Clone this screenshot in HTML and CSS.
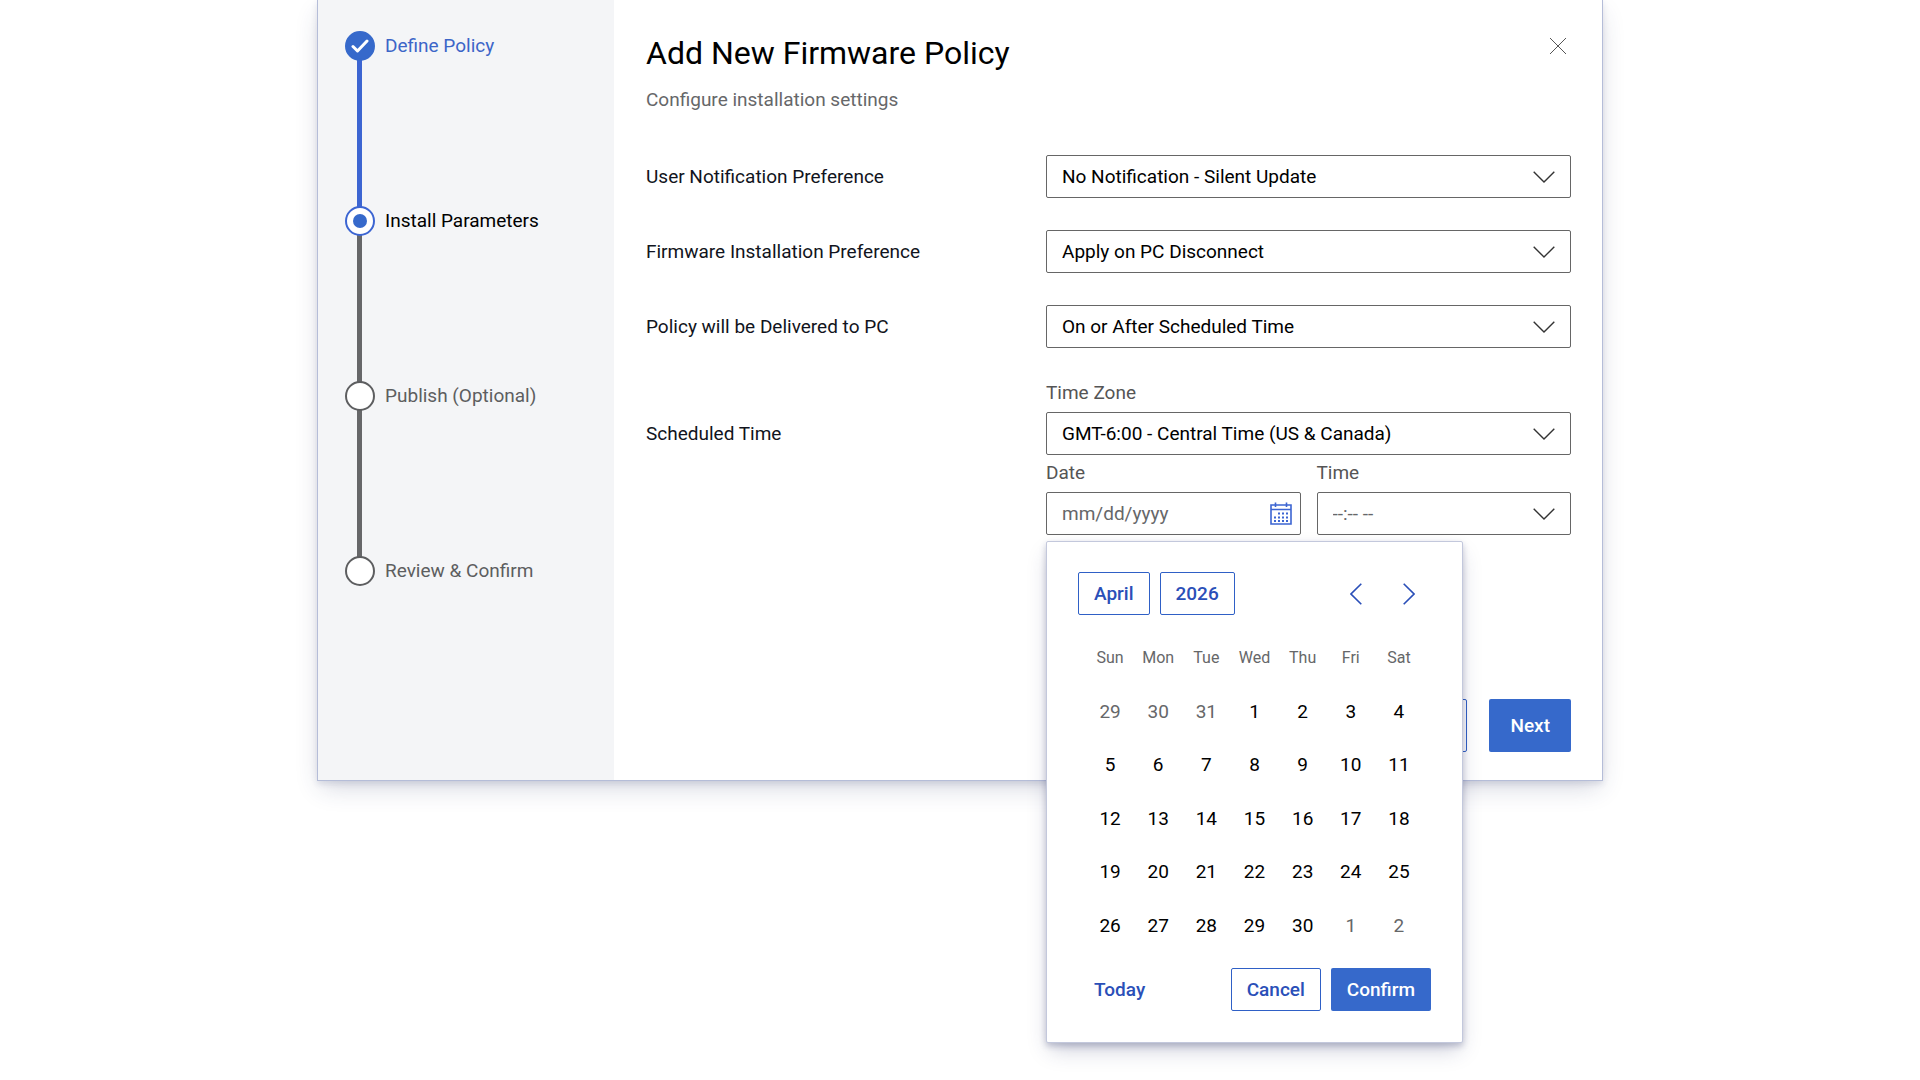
FILE: index.html
```html
<!DOCTYPE html>
<html lang="en">
<head>
<meta charset="utf-8">
<meta name="viewport" content="width=device-width, initial-scale=1">
<title>Add New Firmware Policy</title>
<link rel="stylesheet" href="styles.css">
</head>
<body>
<svg class="sprite" aria-hidden="true">
  <symbol id="chevron-down" viewBox="0 0 22 12"><path d="M0.7 0.7 11 11 21.3 0.7"/></symbol>
  <symbol id="chevron-left" viewBox="0 0 12 22"><path d="M11.3 0.7 1 11 11.3 21.3"/></symbol>
  <symbol id="chevron-right" viewBox="0 0 12 22"><path d="M0.7 0.7 11 11 0.7 21.3"/></symbol>
</svg>
<div class="dialog" role="dialog" aria-labelledby="dialog-title">
  <aside class="sidebar">
    <ol class="steps">
      <li class="step done">
        <span class="marker"><svg width="18" height="16" viewBox="0 0 18 16"><path d="M2 8.500 6.500 13 16 3"/></svg></span>
        <a class="step-label" href="#define">Define Policy</a>
      </li>
      <li class="step current" aria-current="step">
        <span class="marker"></span>
        <span class="step-label">Install Parameters</span>
      </li>
      <li class="step">
        <span class="marker"></span>
        <span class="step-label">Publish (Optional)</span>
      </li>
      <li class="step">
        <span class="marker"></span>
        <span class="step-label">Review &amp; Confirm</span>
      </li>
    </ol>
  </aside>
  <main class="content">
    <header class="header">
      <div>
        <h1 class="title" id="dialog-title">Add New Firmware Policy</h1>
        <p class="subtitle">Configure installation settings</p>
      </div>
      <button class="close" type="button" aria-label="Close"><svg width="18" height="18" viewBox="0 0 18 18"><path d="M1 1 17 17M17 1 1 17"/></svg></button>
    </header>
    <form class="form">
      <div class="row">
        <label for="notify">User Notification Preference</label>
        <div class="select"><select id="notify"><option>No Notification - Silent Update</option></select><svg class="chevron"><use href="#chevron-down"/></svg></div>
      </div>
      <div class="row">
        <label for="install">Firmware Installation Preference</label>
        <div class="select"><select id="install"><option>Apply on PC Disconnect</option></select><svg class="chevron"><use href="#chevron-down"/></svg></div>
      </div>
      <div class="row">
        <label for="deliver">Policy will be Delivered to PC</label>
        <div class="select"><select id="deliver"><option>On or After Scheduled Time</option></select><svg class="chevron"><use href="#chevron-down"/></svg></div>
      </div>
      <div class="row schedule">
        <span class="schedule-label">Scheduled Time</span>
        <div class="schedule-fields">
          <div class="field">
            <label for="zone">Time Zone</label>
            <div class="select"><select id="zone"><option>GMT-6:00 - Central Time (US &amp; Canada)</option></select><svg class="chevron"><use href="#chevron-down"/></svg></div>
          </div>
          <div class="pair">
            <div class="field date-field">
              <label for="date">Date</label>
              <div class="select date">
                <input id="date" type="text" placeholder="mm/dd/yyyy">
                <button class="date-toggle" type="button" aria-label="Open calendar">
                  <svg width="22" height="24" viewBox="0 0 22 24">
                    <path class="line" d="M1 3H21V22H1ZM1 7.500H21M5.500 0.500V5M16.500 0.500V5"/>
                    <path class="dots" d="M8 11.500H18M4 15.500H18M4 19H18"/>
                  </svg>
                </button>
              </div>
              <section class="calendar" aria-label="Choose date">
                <div class="calendar-bar">
                  <button class="btn outline" type="button">April</button>
                  <button class="btn outline" type="button">2026</button>
                  <div class="pager">
                    <button class="arrow" type="button" aria-label="Previous month"><svg><use href="#chevron-left"/></svg></button>
                    <button class="arrow" type="button" aria-label="Next month"><svg><use href="#chevron-right"/></svg></button>
                  </div>
                </div>
                <table class="days">
                  <thead><tr><th>Sun</th><th>Mon</th><th>Tue</th><th>Wed</th><th>Thu</th><th>Fri</th><th>Sat</th></tr></thead>
                  <tbody>
                    <tr><td class="out">29</td><td class="out">30</td><td class="out">31</td><td>1</td><td>2</td><td>3</td><td>4</td></tr>
                    <tr><td>5</td><td>6</td><td>7</td><td>8</td><td>9</td><td>10</td><td>11</td></tr>
                    <tr><td>12</td><td>13</td><td>14</td><td>15</td><td>16</td><td>17</td><td>18</td></tr>
                    <tr><td>19</td><td>20</td><td>21</td><td>22</td><td>23</td><td>24</td><td>25</td></tr>
                    <tr><td>26</td><td>27</td><td>28</td><td>29</td><td>30</td><td class="out">1</td><td class="out">2</td></tr>
                  </tbody>
                </table>
                <div class="calendar-bar">
                  <button class="btn plain" type="button">Today</button>
                  <button class="btn outline push" type="button">Cancel</button>
                  <button class="btn primary" type="button">Confirm</button>
                </div>
              </section>
            </div>
            <div class="field">
              <label for="time">Time</label>
              <div class="select time"><select id="time"><option>--:-- --</option></select><svg class="chevron"><use href="#chevron-down"/></svg></div>
            </div>
          </div>
        </div>
      </div>
      <footer class="actions">
        <button class="btn large outline" type="button">Back</button>
        <button class="btn large primary" type="submit">Next</button>
      </footer>
    </form>
  </main>
</div>
</body>
</html>
```
FILE: styles.css
```css
:root {
  --blue: #3669cb;
  --blue-text: #2a4fb8;
  --gray: #666769;
  --ink: #111420;
}

* {
  box-sizing: border-box;
}

body {
  min-height: 100vh;
  margin: 0;
  background: #fff;
  color: var(--ink);
  font: 19px/24px Roboto, "Liberation Sans", sans-serif;
}

h1, p, ol {
  margin: 0;
  padding: 0;
}

button, input, select {
  font: inherit;
  color: inherit;
}

svg {
  fill: none;
  stroke: currentColor;
}

.sprite {
  display: none;
}

.dialog {
  display: flex;
  max-width: 1286px;
  margin: 0 auto;
  border: 1px solid #b5bdd8;
  border-top: 0;
  box-shadow: 0 10px 24px -4px rgba(40, 48, 100, 0.2), 0 3px 6px rgba(40, 48, 100, 0.12);
}

/* Stepper */
.sidebar {
  flex: 0 0 296px;
  padding: 31px 27px;
  background: #f4f5f7;
}

.steps {
  list-style: none;
}

.step {
  display: flex;
  gap: 10px;
  position: relative;
  height: 175px;
  color: #5d5e60;
}

.step:last-child {
  height: 30px;
}

.step:not(:last-child)::before {
  content: "";
  position: absolute;
  top: 15px;
  left: 12px;
  width: 5px;
  height: 175px;
  background: var(--gray);
}

.step.done::before {
  background: #3c65d2;
}

.marker {
  display: grid;
  place-items: center;
  position: relative;
  z-index: 1;
  width: 30px;
  height: 30px;
  border: 2px solid #5d5e60;
  border-radius: 50%;
  background: #fff;
}

.done .marker {
  border-color: var(--blue);
  background: var(--blue);
  color: #fff;
  stroke-width: 3;
  stroke-linecap: round;
  stroke-linejoin: round;
}

.current .marker {
  border-color: #3c65d2;
}

.current .marker::before {
  content: "";
  width: 14px;
  height: 14px;
  border-radius: 50%;
  background: var(--blue);
}

.step-label {
  line-height: 29px;
}

.done .step-label {
  color: #3c65c8;
  text-decoration: none;
}

.current .step-label {
  color: #000;
}

/* Content */
.content {
  flex: 1;
  padding: 33px 31px 28px 32px;
}

.header {
  display: flex;
  justify-content: space-between;
  align-items: flex-start;
  margin-bottom: 43px;
}

.title {
  margin-bottom: 15px;
  color: #000;
  font-size: 32px;
  font-weight: 400;
  line-height: 40px;
}

.subtitle {
  color: var(--gray);
}

.close {
  display: grid;
  padding: 4px;
  border: 0;
  background: none;
  color: #555;
}

.form {
  display: flex;
  flex-direction: column;
  gap: 32px;
}

.row {
  display: grid;
  grid-template-columns: minmax(0, 1fr) 525px;
  align-items: center;
}

.select {
  display: grid;
  align-items: center;
  color: #000;
}

.select > * {
  grid-area: 1 / 1;
}

.select select,
.select input {
  width: 100%;
  height: 43px;
  padding: 0 15px;
  appearance: none;
  border: 1px solid #666;
  border-radius: 2px;
  outline: 0;
  background: #fff;
}

.select input::placeholder,
.select.time select {
  color: var(--gray);
  opacity: 1;
}

.chevron {
  justify-self: end;
  width: 22px;
  height: 12px;
  margin-right: 16px;
  color: #333;
  stroke-width: 1.4;
  pointer-events: none;
}

.schedule {
  align-items: start;
}

.schedule-label {
  padding-top: 42px;
}

.schedule-fields {
  display: grid;
  gap: 5px;
}

.field {
  display: grid;
  gap: 6px;
}

.field > label {
  color: #555;
  line-height: 26px;
}

.pair {
  display: grid;
  grid-template-columns: 1fr 1fr;
  gap: 16px;
}

.date-field {
  position: relative;
}

.date-toggle {
  display: grid;
  justify-self: end;
  margin-right: 9px;
  padding: 0;
  border: 0;
  background: none;
  color: #3c65d2;
  stroke-width: 1.6;
}

.dots {
  stroke-width: 2;
  stroke-dasharray: 2;
}

/* Buttons */
.btn {
  height: 43px;
  padding: 0 15px;
  border: 1px solid transparent;
  border-radius: 2px;
  background: none;
  color: var(--blue-text);
  font-weight: 500;
}

.btn.outline {
  border-color: #2f60c6;
  background: #fff;
}

.btn.primary {
  background: var(--blue);
  color: #fff;
}

.btn.large {
  height: 53px;
  padding: 0 20px;
}

.actions {
  display: flex;
  justify-content: flex-end;
  gap: 22px;
  margin-top: 132px;
}

/* Date picker */
.calendar {
  position: absolute;
  z-index: 2;
  top: calc(100% + 6px);
  left: 0;
  width: 417px;
  padding: 30px 31px 31px;
  border: 1px solid #c3c8dc;
  border-radius: 2px;
  background: #fff;
  box-shadow: 0 10px 20px -4px rgba(40, 48, 100, 0.25), 0 3px 6px rgba(40, 48, 100, 0.25);
}

.calendar-bar {
  display: flex;
  align-items: center;
  gap: 10px;
}

.push {
  margin-left: auto;
}

.pager {
  display: flex;
  gap: 25px;
  margin: 0 8px 0 auto;
}

.arrow {
  display: grid;
  padding: 0 8px;
  border: 0;
  background: none;
  color: var(--blue-text);
  stroke-width: 1.6;
}

.arrow svg {
  width: 12px;
  height: 22px;
}

.days {
  width: 337px;
  margin: 16px 8px;
  border-collapse: collapse;
  table-layout: fixed;
}

.days th,
.days td {
  height: 53px;
  padding: 0;
  text-align: center;
}

.days th,
.days tr:nth-child(even) td {
  height: 54px;
}

.days th {
  color: var(--gray);
  font-size: 16px;
  font-weight: 400;
}

.days td {
  color: #000;
}

.days .out {
  color: var(--gray);
}
```
